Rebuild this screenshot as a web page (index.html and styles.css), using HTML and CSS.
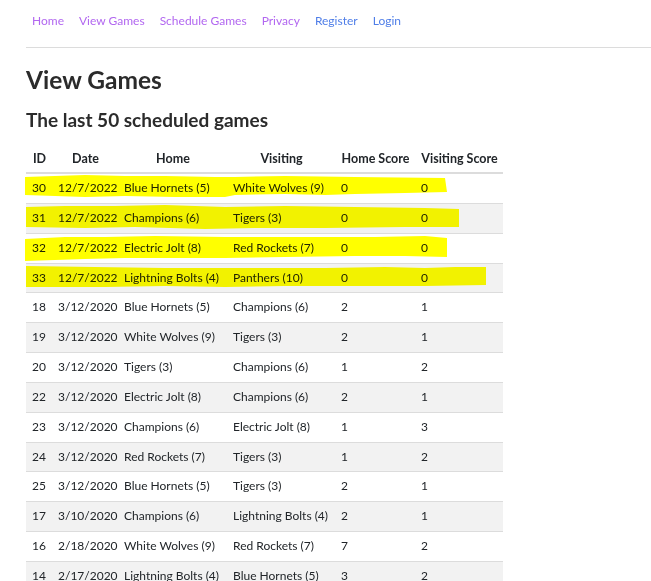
FILE: index.html
```html
<!DOCTYPE html>
<html>
<head>
<meta charset="utf-8">
<link rel="stylesheet" href="styles.css">
</head>
<body>
<header class="topbar">
  <nav class="nav">
    <a class="nav-link visited" href="#">Home</a>
    <a class="nav-link visited" href="#">View Games</a>
    <a class="nav-link visited" href="#">Schedule Games</a>
    <a class="nav-link visited" href="#">Privacy</a>
    <a class="nav-link" href="#">Register</a>
    <a class="nav-link" href="#">Login</a>
  </nav>
</header>
<main class="content">
  <h1 class="title">View Games</h1>
  <h2 class="subtitle">The last 50 scheduled games</h2>
  <div class="table-wrap">
    <table class="games">
      <colgroup>
        <col class="c-id"><col class="c-date"><col class="c-home"><col class="c-vis"><col class="c-hs"><col class="c-vs">
      </colgroup>
      <thead>
        <tr><th>ID</th><th>Date</th><th>Home</th><th>Visiting</th><th>Home Score</th><th>Visiting Score</th></tr>
      </thead>
      <tbody>
        <tr><td>30</td><td>12/7/2022</td><td>Blue Hornets (5)</td><td>White Wolves (9)</td><td>0</td><td>0</td></tr>
        <tr><td>31</td><td>12/7/2022</td><td>Champions (6)</td><td>Tigers (3)</td><td>0</td><td>0</td></tr>
        <tr><td>32</td><td>12/7/2022</td><td>Electric Jolt (8)</td><td>Red Rockets (7)</td><td>0</td><td>0</td></tr>
        <tr><td>33</td><td>12/7/2022</td><td>Lightning Bolts (4)</td><td>Panthers (10)</td><td>0</td><td>0</td></tr>
        <tr><td>18</td><td>3/12/2020</td><td>Blue Hornets (5)</td><td>Champions (6)</td><td>2</td><td>1</td></tr>
        <tr><td>19</td><td>3/12/2020</td><td>White Wolves (9)</td><td>Tigers (3)</td><td>2</td><td>1</td></tr>
        <tr><td>20</td><td>3/12/2020</td><td>Tigers (3)</td><td>Champions (6)</td><td>1</td><td>2</td></tr>
        <tr><td>22</td><td>3/12/2020</td><td>Electric Jolt (8)</td><td>Champions (6)</td><td>2</td><td>1</td></tr>
        <tr><td>23</td><td>3/12/2020</td><td>Champions (6)</td><td>Electric Jolt (8)</td><td>1</td><td>3</td></tr>
        <tr><td>24</td><td>3/12/2020</td><td>Red Rockets (7)</td><td>Tigers (3)</td><td>1</td><td>2</td></tr>
        <tr><td>25</td><td>3/12/2020</td><td>Blue Hornets (5)</td><td>Tigers (3)</td><td>2</td><td>1</td></tr>
        <tr><td>17</td><td>3/10/2020</td><td>Champions (6)</td><td>Lightning Bolts (4)</td><td>2</td><td>1</td></tr>
        <tr><td>16</td><td>2/18/2020</td><td>White Wolves (9)</td><td>Red Rockets (7)</td><td>7</td><td>2</td></tr>
        <tr><td>14</td><td>2/17/2020</td><td>Lightning Bolts (4)</td><td>Blue Hornets (5)</td><td>3</td><td>2</td></tr>
      </tbody>
    </table>
    <svg class="highlight" width="480" height="125" viewBox="0 0 480 125">
      <polygon points="0,4 30,3 60,2 100,3 140,3 190,4 210,4 260,3 330,4 420,5 422,19 380,20 330,21 300,22 260,21 210,22 200,24 150,24 100,23 60,24 0,22"/>
      <polygon points="1,34 40,33 90,33 140,32 200,34 260,33 330,34 400,35 434,36 434,54 380,54 300,55 230,55 180,56 110,54 60,55 1,54"/>
      <polygon points="-2,66 40,64 80,64 130,63 200,64 280,64 350,64 400,63 422,65 422,84 380,83 330,83 260,84 200,85 140,85 100,85 60,86 30,87 -3,88"/>
      <polygon points="1,93 70,94 140,95 210,95 300,95 360,94 400,95 430,94 461,94 461,112 400,113 330,113 260,113 200,114 140,113 80,114 1,114"/>
    </svg>
  </div>
</main>
</body>
</html>
```
FILE: styles.css
```css
html, body {
  margin: 0;
  padding: 0;
  background: #ffffff;
}
body {
  font-family: "Lato", "Open Sans", sans-serif;
  font-size: 12px;
  color: #212529;
}
.topbar {
  margin-left: 26px;
  border-bottom: 1px solid #dcdcdc;
  height: 48px;
  box-sizing: border-box;
}
.nav {
  display: flex;
  gap: 15px;
  padding: 12px 0 0 6px;
  font-size: 12px;
  line-height: 18px;
}
.nav-link {
  color: #4f7ee8;
  text-decoration: none;
}
.nav-link.visited {
  color: #b267f0;
}
.content {
  padding: 0 0 0 26px;
}
.title {
  margin: 16px 0 0 0;
  font-size: 24.5px;
  line-height: 32px;
  font-weight: 700;
  color: #2b2b2b;
}
.subtitle {
  margin: 12px 0 0 0;
  font-size: 19px;
  line-height: 24px;
  font-weight: 700;
  color: #2b2b2b;
}
.table-wrap {
  position: relative;
  margin-top: 12px;
  width: 477px;
}
.games {
  border-collapse: collapse;
  table-layout: fixed;
  width: 477px;
}
.c-id { width: 26px; }
.c-date { width: 66px; }
.c-home { width: 109px; }
.c-vis { width: 108px; }
.c-hs { width: 80px; }
.c-vs { width: 88px; }
.games th {
  font-size: 12.5px;
  font-weight: 700;
  text-align: center;
  padding: 6px 3px 5px 4px;
  line-height: 17px;
  border-bottom: 2px solid #dcdcdc;
  white-space: nowrap;
}
.games td {
  padding: 6px 0 6px 6px;
  line-height: 16.85px;
  border-bottom: 1px solid #dcdcdc;
  white-space: nowrap;
}
.games tbody tr:nth-child(even) {
  background: #f2f2f2;
}
.highlight {
  position: absolute;
  left: -1px;
  top: 29px;
  mix-blend-mode: multiply;
  fill: #ffff00;
  pointer-events: none;
}
```
